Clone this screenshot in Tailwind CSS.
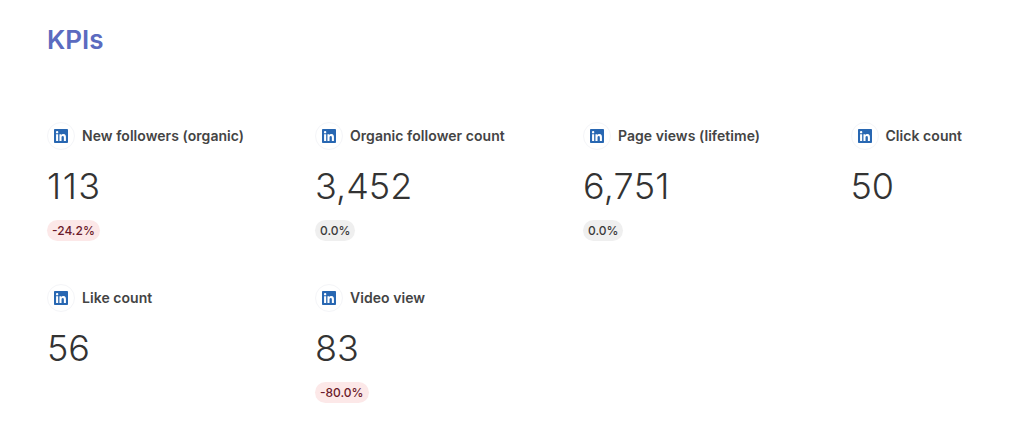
<!DOCTYPE html>
<html lang="en">
<head>
    <meta charset="UTF-8">
    <title>KPIs</title>
    <script src="https://cdn.jsdelivr.net/npm/@tailwindcss/browser@4"></script>
</head>
<body class="bg-white font-['Inter',sans-serif] h-[448px] w-[1024px] overflow-hidden">
    <div class="pl-[47px] pt-[24px]">
        <h1 class="text-[26px] leading-[32px] font-semibold text-[#5b6bc0]">KPIs</h1>

        <div class="grid grid-cols-[268px_268px_267.5px_173px] auto-rows-[162px] mt-[65px]">
            <!-- row 1 -->
            <div>
                <div class="flex items-center gap-[7px] h-[30px]">
                    <span class="w-[28px] h-[28px] rounded-full border border-[#f4f5f8] flex items-center justify-center">
                        <svg class="w-[14px] h-[14px]" viewBox="0 0 24 24"><path fill="#2867b2" d="M20.45 20.45h-3.55v-5.57c0-1.33-.03-3.04-1.85-3.04-1.86 0-2.14 1.45-2.14 2.94v5.67H9.35V9h3.41v1.56h.05c.48-.9 1.64-1.85 3.37-1.85 3.6 0 4.27 2.37 4.27 5.46v6.28zM5.34 7.43a2.06 2.06 0 1 1 0-4.12 2.06 2.06 0 0 1 0 4.12zM7.12 20.45H3.56V9h3.56v11.45zM22.22 0H1.77C.79 0 0 .77 0 1.73v20.54C0 23.23.79 24 1.77 24h20.45c.98 0 1.78-.77 1.78-1.73V1.73C24 .77 23.2 0 22.22 0z"/></svg>
                    </span>
                    <span class="text-sm tracking-[0.05px] font-semibold text-[#444444]">New followers (organic)</span>
                </div>
                <div class="text-[36px] leading-[44px] font-light tracking-[1.5px] text-[#333333] mt-[13px]">113</div>
                <div class="mt-[12px] inline-flex items-center h-[21px] px-[5px] rounded-full bg-[#fce8e8] text-xs font-medium text-[#6b1a2a]">-24.2%</div>
            </div>
            <div>
                <div class="flex items-center gap-[7px] h-[30px]">
                    <span class="w-[28px] h-[28px] rounded-full border border-[#f4f5f8] flex items-center justify-center">
                        <svg class="w-[14px] h-[14px]" viewBox="0 0 24 24"><path fill="#2867b2" d="M20.45 20.45h-3.55v-5.57c0-1.33-.03-3.04-1.85-3.04-1.86 0-2.14 1.45-2.14 2.94v5.67H9.35V9h3.41v1.56h.05c.48-.9 1.64-1.85 3.37-1.85 3.6 0 4.27 2.37 4.27 5.46v6.28zM5.34 7.43a2.06 2.06 0 1 1 0-4.12 2.06 2.06 0 0 1 0 4.12zM7.12 20.45H3.56V9h3.56v11.45zM22.22 0H1.77C.79 0 0 .77 0 1.73v20.54C0 23.23.79 24 1.77 24h20.45c.98 0 1.78-.77 1.78-1.73V1.73C24 .77 23.2 0 22.22 0z"/></svg>
                    </span>
                    <span class="text-sm tracking-[0.05px] font-semibold text-[#444444]">Organic follower count</span>
                </div>
                <div class="text-[36px] leading-[44px] font-light text-[#333333] mt-[13px]">3,452</div>
                <div class="mt-[12px] inline-flex items-center h-[21px] px-[5px] rounded-full bg-[#efefef] text-xs font-medium text-[#3a3a3a]">0.0%</div>
            </div>
            <div>
                <div class="flex items-center gap-[7px] h-[30px]">
                    <span class="w-[28px] h-[28px] rounded-full border border-[#f4f5f8] flex items-center justify-center">
                        <svg class="w-[14px] h-[14px]" viewBox="0 0 24 24"><path fill="#2867b2" d="M20.45 20.45h-3.55v-5.57c0-1.33-.03-3.04-1.85-3.04-1.86 0-2.14 1.45-2.14 2.94v5.67H9.35V9h3.41v1.56h.05c.48-.9 1.64-1.85 3.37-1.85 3.6 0 4.27 2.37 4.27 5.46v6.28zM5.34 7.43a2.06 2.06 0 1 1 0-4.12 2.06 2.06 0 0 1 0 4.12zM7.12 20.45H3.56V9h3.56v11.45zM22.22 0H1.77C.79 0 0 .77 0 1.73v20.54C0 23.23.79 24 1.77 24h20.45c.98 0 1.78-.77 1.78-1.73V1.73C24 .77 23.2 0 22.22 0z"/></svg>
                    </span>
                    <span class="text-sm tracking-[0.05px] font-semibold text-[#444444]">Page views (lifetime)</span>
                </div>
                <div class="text-[36px] leading-[44px] font-light tracking-[0.25px] text-[#333333] mt-[13px]">6,751</div>
                <div class="mt-[12px] inline-flex items-center h-[21px] px-[5px] rounded-full bg-[#efefef] text-xs font-medium text-[#3a3a3a]">0.0%</div>
            </div>
            <div>
                <div class="flex items-center gap-[7px] h-[30px]">
                    <span class="w-[28px] h-[28px] rounded-full border border-[#f4f5f8] flex items-center justify-center">
                        <svg class="w-[14px] h-[14px]" viewBox="0 0 24 24"><path fill="#2867b2" d="M20.45 20.45h-3.55v-5.57c0-1.33-.03-3.04-1.85-3.04-1.86 0-2.14 1.45-2.14 2.94v5.67H9.35V9h3.41v1.56h.05c.48-.9 1.64-1.85 3.37-1.85 3.6 0 4.27 2.37 4.27 5.46v6.28zM5.34 7.43a2.06 2.06 0 1 1 0-4.12 2.06 2.06 0 0 1 0 4.12zM7.12 20.45H3.56V9h3.56v11.45zM22.22 0H1.77C.79 0 0 .77 0 1.73v20.54C0 23.23.79 24 1.77 24h20.45c.98 0 1.78-.77 1.78-1.73V1.73C24 .77 23.2 0 22.22 0z"/></svg>
                    </span>
                    <span class="text-sm tracking-[0.05px] font-semibold text-[#444444]">Click count</span>
                </div>
                <div class="text-[36px] leading-[44px] font-light text-[#333333] mt-[13px]">50</div>
            </div>
            <!-- row 2 -->
            <div>
                <div class="flex items-center gap-[7px] h-[30px]">
                    <span class="w-[28px] h-[28px] rounded-full border border-[#f4f5f8] flex items-center justify-center">
                        <svg class="w-[14px] h-[14px]" viewBox="0 0 24 24"><path fill="#2867b2" d="M20.45 20.45h-3.55v-5.57c0-1.33-.03-3.04-1.85-3.04-1.86 0-2.14 1.45-2.14 2.94v5.67H9.35V9h3.41v1.56h.05c.48-.9 1.64-1.85 3.37-1.85 3.6 0 4.27 2.37 4.27 5.46v6.28zM5.34 7.43a2.06 2.06 0 1 1 0-4.12 2.06 2.06 0 0 1 0 4.12zM7.12 20.45H3.56V9h3.56v11.45zM22.22 0H1.77C.79 0 0 .77 0 1.73v20.54C0 23.23.79 24 1.77 24h20.45c.98 0 1.78-.77 1.78-1.73V1.73C24 .77 23.2 0 22.22 0z"/></svg>
                    </span>
                    <span class="text-sm tracking-[0.05px] font-semibold text-[#444444]">Like count</span>
                </div>
                <div class="text-[36px] leading-[44px] font-light text-[#333333] mt-[13px]">56</div>
            </div>
            <div>
                <div class="flex items-center gap-[7px] h-[30px]">
                    <span class="w-[28px] h-[28px] rounded-full border border-[#f4f5f8] flex items-center justify-center">
                        <svg class="w-[14px] h-[14px]" viewBox="0 0 24 24"><path fill="#2867b2" d="M20.45 20.45h-3.55v-5.57c0-1.33-.03-3.04-1.85-3.04-1.86 0-2.14 1.45-2.14 2.94v5.67H9.35V9h3.41v1.56h.05c.48-.9 1.64-1.85 3.37-1.85 3.6 0 4.27 2.37 4.27 5.46v6.28zM5.34 7.43a2.06 2.06 0 1 1 0-4.12 2.06 2.06 0 0 1 0 4.12zM7.12 20.45H3.56V9h3.56v11.45zM22.22 0H1.77C.79 0 0 .77 0 1.73v20.54C0 23.23.79 24 1.77 24h20.45c.98 0 1.78-.77 1.78-1.73V1.73C24 .77 23.2 0 22.22 0z"/></svg>
                    </span>
                    <span class="text-sm tracking-[0.05px] font-semibold text-[#444444]">Video view</span>
                </div>
                <div class="text-[36px] leading-[44px] font-light text-[#333333] mt-[13px]">83</div>
                <div class="mt-[12px] inline-flex items-center h-[21px] px-[5px] rounded-full bg-[#fce8e8] text-xs font-medium text-[#6b1a2a]">-80.0%</div>
            </div>
        </div>
    </div>
</body>
</html>
